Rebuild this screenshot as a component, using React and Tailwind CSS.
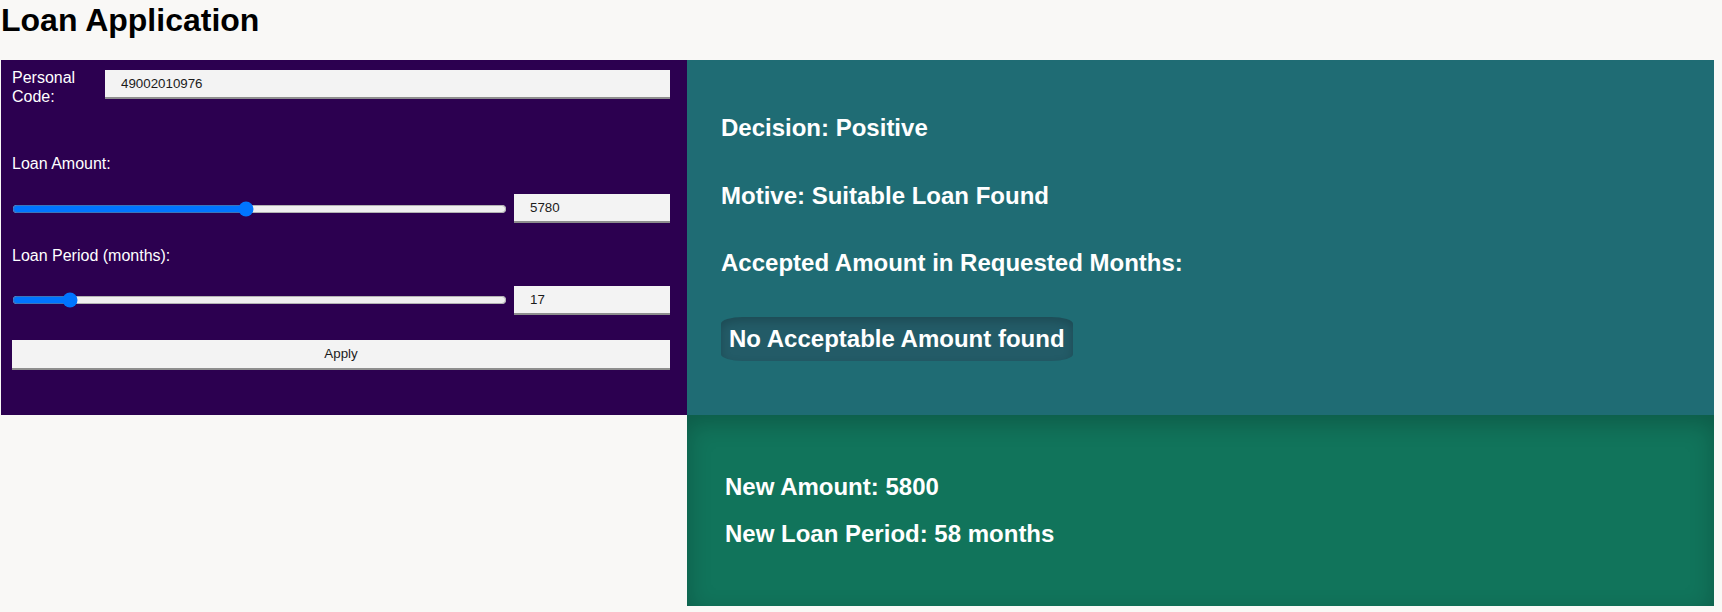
import React, { useState } from 'react';

const fieldClass =
    "h-[29px] bg-[#f3f3f3] border-0 border-b-2 border-[#8e8e8e] pl-[16px] text-[13.33px] text-[#1b1b1b] outline-none";

const App = () => {
    const [personalCode, setPersonalCode] = useState('49002010976');
    const [amount, setAmount] = useState(5780);
    const [period, setPeriod] = useState(17);

    return (
        <div className="min-h-screen bg-[#f9f8f6] pt-[2px] pl-[1px] pr-[8px] font-['Liberation_Sans',Arial,sans-serif] text-black">
            <h1 className="mb-[21.44px] text-[32px] font-bold leading-[1.15]">Loan Application</h1>

            <div className="grid grid-cols-[686px_1fr]">
                {/* form */}
                <div className="bg-[#2c0050] pl-[11px] pr-[17px] pt-[9px] text-white text-[16px] leading-[18.4px]">
                    <div className="flex items-start">
                        <label htmlFor="personalCode" className="w-[85px] shrink-0">
                            Personal Code:
                        </label>
                        <input
                            id="personalCode"
                            type="text"
                            value={personalCode}
                            onChange={(e) => setPersonalCode(e.target.value)}
                            className={`${fieldClass} ml-[8px] mt-[1px] flex-1 min-w-0`}
                        />
                    </div>

                    <label htmlFor="amount" className="block mt-[49px]">Loan Amount:</label>
                    <div className="flex items-center gap-[7px] mt-[21px] h-[29px]">
                        <input
                            id="amount"
                            type="range"
                            min="2000"
                            max="10000"
                            step="10"
                            value={amount}
                            onChange={(e) => setAmount(Number(e.target.value))}
                            className="flex-1 min-w-0"
                        />
                        <input
                            type="text"
                            value={amount}
                            onChange={(e) => setAmount(Number(e.target.value) || 0)}
                            className={`${fieldClass} w-[156px]`}
                        />
                    </div>

                    <label htmlFor="period" className="block mt-[24px]">Loan Period (months):</label>
                    <div className="flex items-center gap-[7px] mt-[20px] h-[29px]">
                        <input
                            id="period"
                            type="range"
                            min="12"
                            max="60"
                            value={period}
                            onChange={(e) => setPeriod(Number(e.target.value))}
                            className="flex-1 min-w-0"
                        />
                        <input
                            type="text"
                            value={period}
                            onChange={(e) => setPeriod(Number(e.target.value) || 0)}
                            className={`${fieldClass} w-[156px]`}
                        />
                    </div>

                    <button
                        type="button"
                        className="mt-[25px] w-full h-[30px] bg-[#f3f3f3] border-0 border-b-2 border-[#8e8e8e] text-[13.33px] text-[#1b1b1b]"
                    >
                        Apply
                    </button>
                </div>

                {/* decision */}
                <div className="flex flex-col items-start bg-[#1f6c74] p-[34px] text-white">
                    <h2 className="my-[20px] text-[24px] font-bold leading-[1.15]">Decision: Positive</h2>
                    <h2 className="my-[20px] text-[24px] font-bold leading-[1.15]">Motive: Suitable Loan Found</h2>
                    <h2 className="my-[20px] text-[24px] font-bold leading-[1.15]">Accepted Amount in Requested Months:</h2>
                    <h2 className="my-[20px] p-[8px] text-[24px] font-bold leading-[1.15] bg-[#235b67] rounded-[22px_/_7px] shadow-[inset_0_4px_10px_rgba(0,0,0,0.18)]">
                        No Acceptable Amount found
                    </h2>
                </div>

                <div></div>

                {/* suggestion */}
                <div className="bg-[#11745b] p-[38px] text-white shadow-[inset_0_8px_24px_rgba(0,0,0,0.22)]">
                    <h2 className="my-[20px] text-[24px] font-bold leading-[1.15]">New Amount: 5800</h2>
                    <h2 className="my-[20px] text-[24px] font-bold leading-[1.15]">New Loan Period: 58 months</h2>
                </div>
            </div>
        </div>
    );
};

export default App;
